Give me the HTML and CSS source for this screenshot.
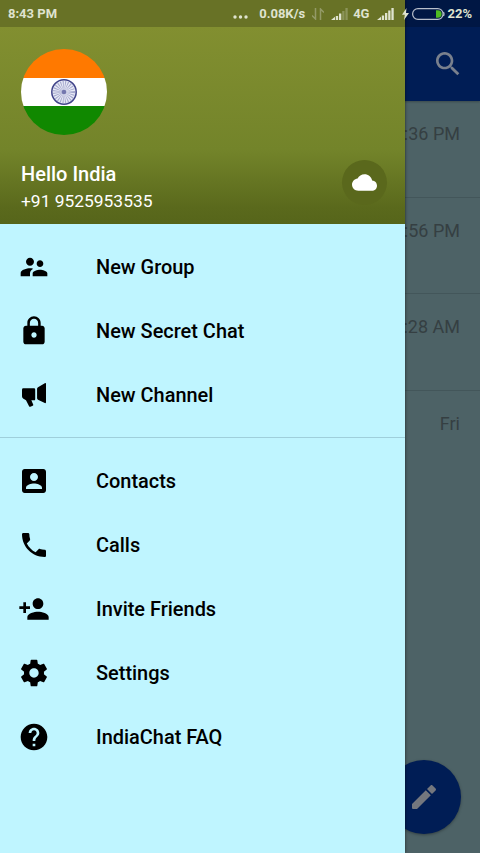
FILE: index.html
```html
<!DOCTYPE html>
<html lang="en">
<head>
  <meta charset="UTF-8">
  <title>IndiaChat</title>
  <link rel="stylesheet" href="styles.css">
</head>
<body>
  <div class="screen">
    <!-- chat list -->
    <main class="chats">
      <header class="toolbar">
        <svg class="icon" viewBox="0 0 24 24"><path d="M15.5 14h-.79l-.28-.27C15.41 12.59 16 11.11 16 9.5 16 5.91 13.09 3 9.5 3S3 5.91 3 9.5 5.91 16 9.5 16c1.61 0 3.09-.59 4.23-1.57l.27.28v.79l5 4.99L20.49 19l-4.99-5zm-6 0C7.01 14 5 11.99 5 9.5S7.01 5 9.5 5 14 7.01 14 9.5 11.99 14 9.5 14z"/></svg>
      </header>
      <ul class="chat-list">
        <li>:36 PM</li>
        <li>:56 PM</li>
        <li>:28 AM</li>
        <li>Fri</li>
      </ul>
      <div class="fab">
        <svg class="icon" viewBox="0 0 24 24"><path d="M3 17.25V20.2q0 .8.8.8h2.95L17.1 10.65l-3.75-3.75zM20.7 7.05c.4-.4.4-1.03 0-1.42l-2.33-2.33c-.4-.4-1.03-.4-1.42 0l-2.7 2.7 3.75 3.75z"/></svg>
      </div>
    </main>

    <!-- side drawer -->
    <aside class="drawer">
      <header class="profile">
        <svg class="avatar" viewBox="0 0 86 86">
          <clipPath id="round"><circle cx="43" cy="43" r="43"/></clipPath>
          <g clip-path="url(#round)">
            <rect width="86" height="29" fill="#ff7900"/>
            <rect y="29" width="86" height="28" fill="#fff"/>
            <rect y="57" width="86" height="29" fill="#108800"/>
          </g>
          <circle cx="43" cy="43" r="12.2" fill="#e9ebf7" stroke="#41448a" stroke-width="1.5"/>
          <circle cx="43" cy="43" r="6" fill="none" stroke="#777bb0" stroke-opacity=".6" stroke-width="10" stroke-dasharray=".7 .87"/>
          <circle cx="43" cy="43" r="2.3" fill="#7377ae"/>
        </svg>
        <div class="profile-row">
          <div>
            <div class="name">Hello India</div>
            <div class="phone">+91 9525953535</div>
          </div>
          <div class="cloud">
            <svg viewBox="0 0 24 24"><path d="M19.35 10.04C18.67 6.59 15.64 4 12 4 9.11 4 6.6 5.64 5.35 8.04 2.34 8.36 0 10.91 0 14c0 3.31 2.69 6 6 6h13c2.76 0 5-2.24 5-5 0-2.64-2.05-4.78-4.65-4.96z"/></svg>
          </div>
        </div>
      </header>
      <ul class="menu">
        <li>
          <svg class="icon" viewBox="0 0 24 24"><path d="M16.5 12c1.38 0 2.49-1.12 2.49-2.5S17.88 7 16.5 7C15.12 7 14 8.12 14 9.5s1.12 2.5 2.5 2.5zM9 11c1.66 0 2.99-1.34 2.99-3S10.66 5 9 5C7.34 5 6 6.34 6 8s1.34 3 3 3zm7.5 3c-1.83 0-5.5.92-5.5 2.75V19h11v-2.25c0-1.83-3.67-2.75-5.5-2.75zM9 13c-2.33 0-7 1.17-7 3.5V19h7v-2.25c0-.85.33-2.34 2.37-3.47C10.5 13.1 9.66 13 9 13z"/></svg>
          New Group
        </li>
        <li>
          <svg class="icon" viewBox="0 0 24 24"><path d="M18 8h-1V6c0-2.76-2.24-5-5-5S7 3.24 7 6v2H6c-1.1 0-2 .9-2 2v10c0 1.1.9 2 2 2h12c1.1 0 2-.9 2-2V10c0-1.1-.9-2-2-2zm-6 9c-1.1 0-2-.9-2-2s.9-2 2-2 2 .9 2 2-.9 2-2 2zm3.1-9H8.9V6c0-1.71 1.39-3.1 3.1-3.1 1.71 0 3.1 1.39 3.1 3.1v2z"/></svg>
          New Secret Chat
        </li>
        <li>
          <svg class="icon" viewBox="0 0 24 24"><path d="M4 7h8q.9 0 .9.9v7.200q0 .9-.9.900h-2l1.400 3.100q.3.700-.4 1l-1.700.7q-.7.200-1-.4L6 16 3.800 14.600Q3 14 3 13V8q0-1 1-1zM14.300 7.300Q14.300 6.500 15 6.100L20.100 3.100Q21 2.700 21 3.600V17.500Q21 18.400 20.100 18L15 15.500Q14.300 15.100 14.300 14.300z"/></svg>
          New Channel
        </li>
      </ul>
      <ul class="menu">
        <li>
          <svg class="icon" viewBox="0 0 24 24"><path d="M3 5v14c0 1.1.89 2 2 2h14c1.1 0 2-.9 2-2V5c0-1.1-.9-2-2-2H5c-1.11 0-2 .9-2 2zm12 4c0 1.66-1.34 3-3 3s-3-1.34-3-3 1.34-3 3-3 3 1.34 3 3zm-9 8c0-2 4-3.1 6-3.1s6 1.1 6 3.1v1H6v-1z"/></svg>
          Contacts
        </li>
        <li>
          <svg class="icon" viewBox="0 0 24 24"><path d="M6.62 10.79c1.44 2.83 3.76 5.14 6.59 6.59l2.2-2.2c.27-.27.67-.36 1.02-.24 1.12.37 2.33.57 3.57.57.55 0 1 .45 1 1V20c0 .55-.45 1-1 1-9.39 0-17-7.61-17-17 0-.55.45-1 1-1h3.5c.55 0 1 .45 1 1 0 1.25.2 2.45.57 3.57.11.35.03.74-.25 1.02l-2.2 2.2z"/></svg>
          Calls
        </li>
        <li>
          <svg class="icon" viewBox="0 0 24 24"><path d="M15 12c2.21 0 4-1.79 4-4s-1.79-4-4-4-4 1.79-4 4 1.79 4 4 4zm-9-2V7H4v3H1v2h3v3h2v-3h3v-2H6zm9 4c-2.67 0-8 1.34-8 4v2h16v-2c0-2.66-5.33-4-8-4z"/></svg>
          Invite Friends
        </li>
        <li>
          <svg class="icon" viewBox="0 0 24 24"><path d="M19.43 12.98c.04-.32.07-.64.07-.98s-.03-.66-.07-.98l2.11-1.65c.19-.15.24-.42.12-.64l-2-3.46c-.12-.22-.39-.3-.61-.22l-2.49 1c-.52-.4-1.08-.73-1.69-.98l-.38-2.65C14.46 2.18 14.25 2 14 2h-4c-.25 0-.46.18-.49.42l-.38 2.65c-.61.25-1.17.59-1.69.98l-2.49-1c-.23-.09-.49 0-.61.22l-2 3.46c-.13.22-.07.49.12.64l2.11 1.65c-.04.32-.07.65-.07.98s.03.66.07.98l-2.11 1.65c-.19.15-.24.42-.12.64l2 3.46c.12.22.39.3.61.22l2.49-1c.52.4 1.08.73 1.69.98l.38 2.65c.03.24.24.42.49.42h4c.25 0 .46-.18.49-.42l.38-2.65c.61-.25 1.17-.59 1.69-.98l2.49 1c.23.09.49 0 .61-.22l2-3.46c.12-.22.07-.49-.12-.64l-2.11-1.65zM12 15.5c-1.93 0-3.5-1.57-3.5-3.5s1.57-3.5 3.5-3.5 3.5 1.57 3.5 3.5-1.57 3.5-3.5 3.5z"/></svg>
          Settings
        </li>
        <li>
          <svg class="icon" viewBox="0 0 24 24"><path d="M12 2C6.48 2 2 6.48 2 12s4.48 10 10 10 10-4.48 10-10S17.52 2 12 2zm1 17h-2v-2h2v2zm2.07-7.75l-.9.92C13.45 12.9 13 13.5 13 15h-2v-.5c0-1.1.45-2.1 1.17-2.83l1.24-1.26c.37-.36.59-.86.59-1.41 0-1.1-.9-2-2-2s-2 .9-2 2H8c0-2.21 1.79-4 4-4s4 1.79 4 4c0 .88-.36 1.68-.93 2.25z"/></svg>
          IndiaChat FAQ
        </li>
      </ul>
    </aside>

    <!-- system status bar -->
    <div class="status">
      <span class="clock">8:43 PM</span>
      <svg class="dots" viewBox="0 0 15 4"><circle cx="2" cy="2" r="1.7"/><circle cx="7.5" cy="2" r="1.7"/><circle cx="13" cy="2" r="1.7"/></svg>
      <span class="speed">0.08K/s</span>
      <svg class="arrows" viewBox="0 0 12 12"><path d="M3.5 0v11L0 7.5M8.500 12V1L12 4.500"/></svg>
      <svg class="signal" viewBox="0 0 17 12"><path d="M0 12L4 8.800V12zM4.800 12V8h2.300v4zM8 12V5.500h2.300V12z"/><path opacity=".3" d="M11.200 12V3h2.300v9zM14.400 12V0h2.300v12z"/></svg>
      <span class="net">4G</span>
      <svg class="signal" viewBox="0 0 17 12"><path d="M0 12L4 8.800V12zM4.800 12V7.500h2.300V12zM8 12V5h2.300v7zM11.200 12V2.500h2.300V12zM14.400 12V0h2.300v12z"/></svg>
      <svg class="bolt" viewBox="0 0 7 12"><path d="M4.500 0L0 6.700h2.800L2 12l5-7H4z"/></svg>
      <svg class="battery" viewBox="0 0 33 12"><rect x=".6" y=".6" width="30.5" height="10.8" rx="5.4"/><path class="level" d="M24 2.200h1.800a3.800 3.800 0 0 1 0 7.600H24z"/><path class="cap" d="M31.500 4q1 2 0 4"/></svg>
      <span>22%</span>
    </div>
  </div>
</body>
</html>
```

FILE: styles.css
```css
body {
  margin: 0;
  font-family: Roboto, sans-serif;
}

ul {
  list-style: none;
  margin: 0;
  padding: 0;
}

svg {
  display: block;
  flex: none;
  fill: currentColor;
}

.icon {
  width: 32px;
  height: 32px;
}

.screen {
  position: relative;
  width: 480px;
  height: 853px;
  overflow: hidden;
}

/* chat list, dimmed while the drawer is open */
.chats {
  height: 853px;
  background: #4d6266;
}

.toolbar {
  display: flex;
  justify-content: flex-end;
  box-sizing: border-box;
  height: 101px;
  padding: 48px 16px 0 0;
  background: #001d55;
  color: #79808d;
  box-shadow: 0 1px 2px rgba(0, 0, 0, .25);
}

.chat-list li {
  box-sizing: border-box;
  height: 96.5px;
  padding: 22px 20px 0 0;
  border-bottom: 1px solid #43565a;
  color: #353f42;
  font-size: 18px;
  line-height: 22px;
  text-align: right;
}
.chat-list li:last-child {
  border-bottom: 0;
}

.fab {
  position: absolute;
  left: 387px;
  top: 760px;
  display: flex;
  align-items: center;
  justify-content: center;
  width: 74px;
  height: 74px;
  border-radius: 50%;
  background: #001d55;
  color: #74777e;
  box-shadow: 0 1px 3px rgba(0, 0, 0, .35);
}

.drawer {
  position: absolute;
  left: 0;
  top: 0;
  width: 405px;
  height: 853px;
  background: #bff5ff;
  box-shadow: 0 0 3px rgba(0, 0, 0, .6);
}

.profile {
  box-sizing: border-box;
  height: 224px;
  padding: 49px 18px 0 21px;
  background: linear-gradient(#828f30 27px, #73842a 150px, #5a691c 208px, #56651a);
  color: #fff;
}

.avatar {
  width: 86px;
  height: 86px;
}

.profile-row {
  display: flex;
  justify-content: space-between;
  margin-top: 25px;
}

.name {
  padding-top: 2px;
  font-size: 20px;
  font-weight: 500;
  line-height: 24px;
}

.phone {
  margin-top: 3px;
  font-size: 17.4px;
  line-height: 24px;
}

.cloud {
  display: flex;
  align-items: center;
  justify-content: center;
  width: 45px;
  height: 45px;
  border-radius: 50%;
  background: #5a681c;
}
.cloud svg {
  width: 25px;
  height: 25px;
}

.menu {
  padding: 11px 0 10px;
}
.menu + .menu {
  border-top: 1px solid #9fcfdb;
}
.menu li {
  display: flex;
  align-items: center;
  gap: 46px;
  height: 64px;
  padding-left: 18px;
  color: #000;
  font-size: 19.95px;
  font-weight: 500;
}
.menu .icon {
  margin-bottom: 1px;
}

.status {
  position: absolute;
  left: 0;
  top: 0;
  display: flex;
  align-items: center;
  box-sizing: border-box;
  width: 480px;
  height: 27px;
  padding: 0 8px;
  background: rgba(0, 0, 0, .2);
  color: #dfe3cf;
  font-size: 13px;
  font-weight: 700;
}
.clock {
  flex: 1;
}
.dots {
  width: 15px;
  height: 4px;
  margin: 6px 11px 0 0;
}
.arrows {
  width: 12px;
  height: 12px;
  margin: 0 7px 0 7px;
  fill: none;
  stroke: #939a67;
  stroke-width: 1.5;
}
.signal {
  width: 17px;
  height: 12px;
}
.net {
  margin: 0 8px 0 5px;
}
.bolt {
  width: 7px;
  height: 12px;
  margin: 0 3px 0 8px;
}
.battery {
  width: 33px;
  height: 12px;
  margin-right: 2px;
  fill: none;
  stroke: #b9c0cc;
  stroke-width: 1.2;
}
.battery .level {
  fill: #4fbd22;
  stroke: none;
}
```
